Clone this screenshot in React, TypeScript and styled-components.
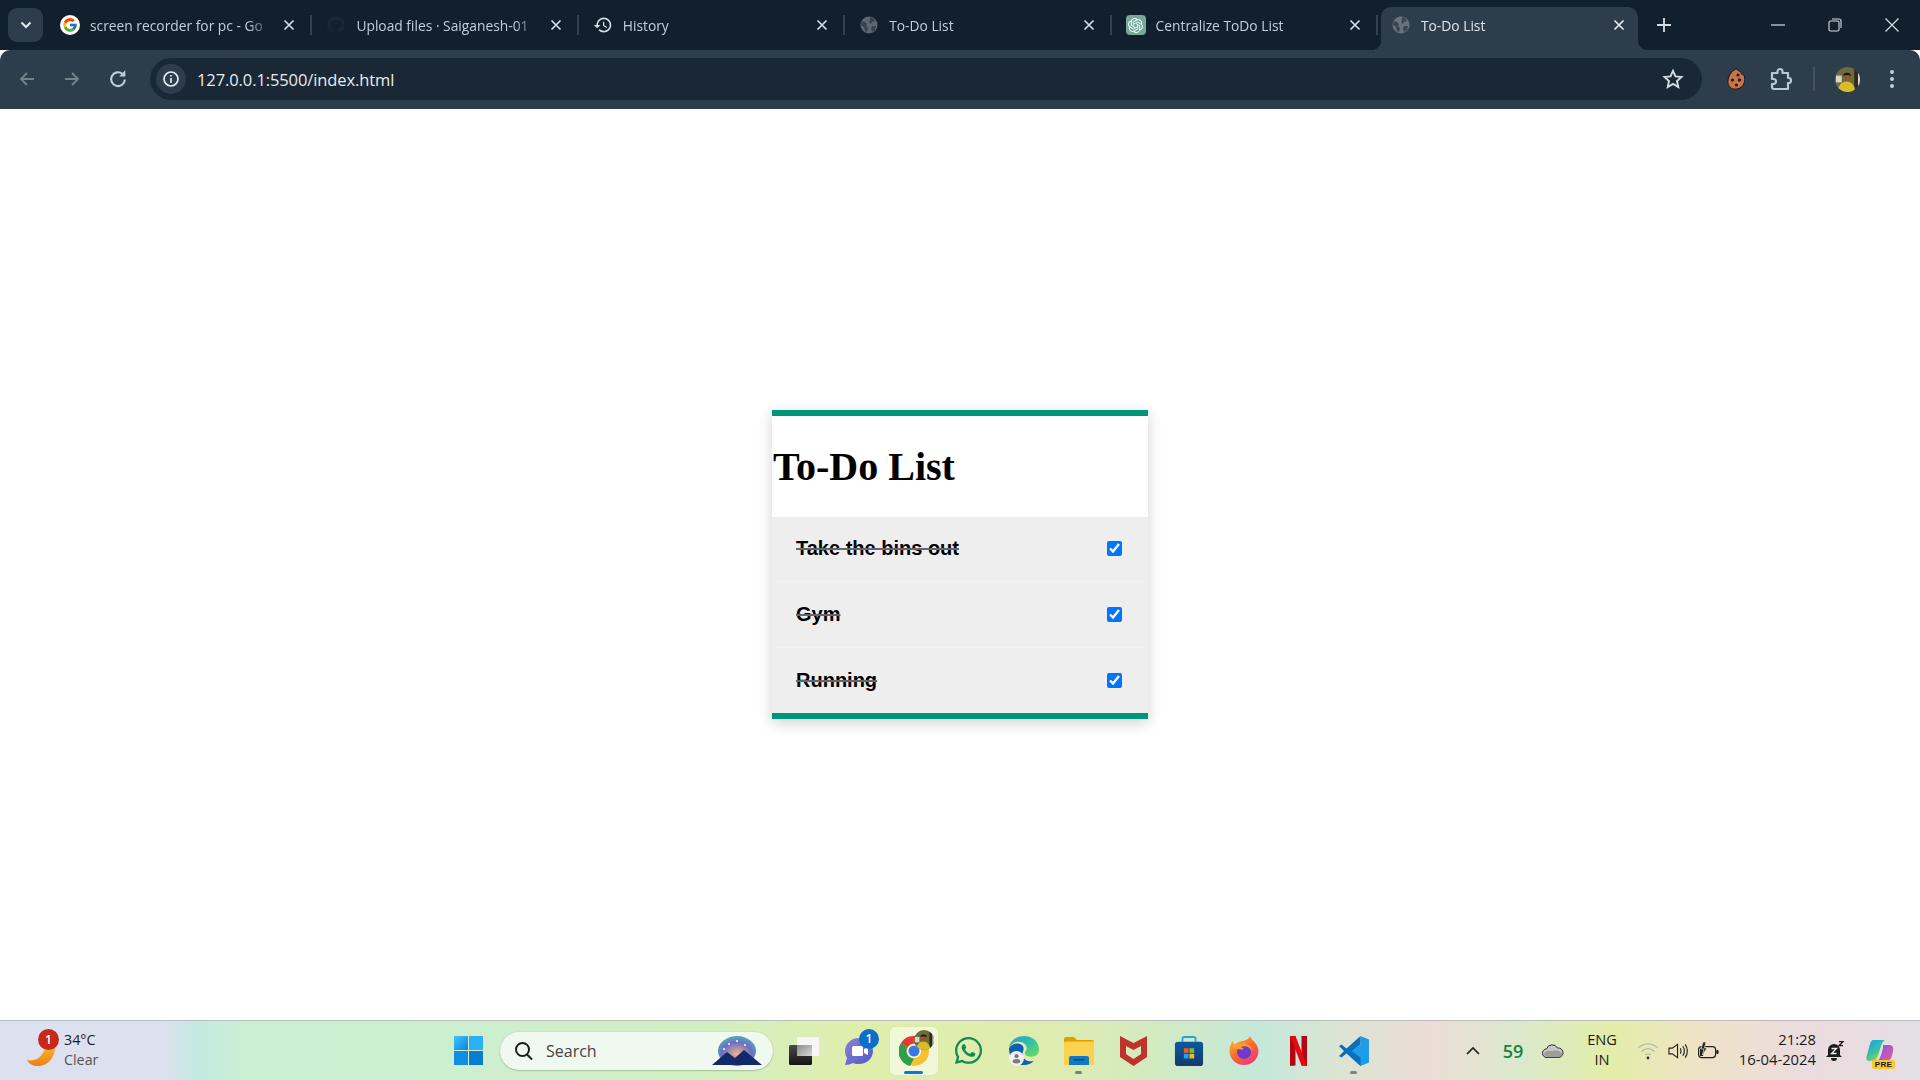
import React from 'react'
import styled, { createGlobalStyle } from 'styled-components'
import { FaGithub, FaWhatsapp } from 'react-icons/fa'
import { FcGoogle } from 'react-icons/fc'
import { SiOpenai } from 'react-icons/si'
import { MdHistory } from 'react-icons/md'

const GlobalStyle = createGlobalStyle`
  html, body {
    margin: 0;
    padding: 0;
    height: 100%;
    overflow: hidden;
    background: #fff;
  }
  * { box-sizing: border-box; }
`

const UI_FONT = `"Open Sans", "Noto Sans", sans-serif`

const Screen = styled.div`
  display: flex;
  flex-direction: column;
  width: 1920px;
  height: 1080px;
`

/* ---------- browser chrome ---------- */

const TabStrip = styled.div`
  display: flex;
  align-items: flex-end;
  height: 50px;
  flex: none;
  background: #12202e;
  padding-left: 8px;
  font-family: ${UI_FONT};
`
const TabListBtn = styled.div`
  width: 35px;
  height: 34px;
  margin: 0 3px 8px 0;
  border-radius: 9px;
  background: #2e3d4b;
  display: flex;
  align-items: center;
  justify-content: center;
`
const Tab = styled.div`
  position: relative;
  display: flex;
  align-items: center;
  width: 266.4px;
  height: 43px;
  padding: 0 13px 7px 14px;
  color: #c3ced8;

  &::after {
    content: '';
    position: absolute;
    right: 0;
    top: 8px;
    width: 2px;
    height: 20px;
    background: #33424f;
  }
`
const ActiveTab = styled.div`
  position: relative;
  display: flex;
  align-items: center;
  width: 257px;
  height: 43px;
  margin-left: 3px;
  padding: 0 9px 7px 10px;
  border-radius: 10px 10px 0 0;
  background: #2e3d4b;
  color: #dfe6ec;

  &::before, &::after {
    content: '';
    position: absolute;
    bottom: 0;
    width: 10px;
    height: 10px;
  }
  &::before {
    left: -10px;
    background: radial-gradient(circle at 0 0, transparent 10px, #2e3d4b 10.5px);
  }
  &::after {
    right: -10px;
    background: radial-gradient(circle at 100% 0, transparent 10px, #2e3d4b 10.5px);
  }
`
const Favicon = styled.span`
  flex: none;
  width: 20px;
  height: 20px;
  margin: 0 10px 0 0;
  display: flex;
  align-items: center;
  justify-content: center;
`
const TabTitle = styled.span`
  flex: 1;
  min-width: 0;
  font-size: 13.8px;
  white-space: nowrap;
  -webkit-mask-image: linear-gradient(90deg, #000 88%, rgba(0, 0, 0, 0.15) 100%);
  mask-image: linear-gradient(90deg, #000 88%, rgba(0, 0, 0, 0.15) 100%);
`
const TabClose = styled.span`
  flex: none;
  width: 20px;
  height: 20px;
  margin-left: 10px;
  display: flex;
  align-items: center;
  justify-content: center;
`
const NewTab = styled.div`
  width: 20px;
  height: 20px;
  margin: 0 0 15px 16px;
  display: flex;
  align-items: center;
  justify-content: center;
`
const WindowControls = styled.div`
  display: flex;
  margin: 0 0 15px auto;
`
const WinBtn = styled.div`
  width: 57px;
  height: 20px;
  display: flex;
  align-items: center;
  justify-content: center;
`
const Toolbar = styled.div`
  display: flex;
  align-items: center;
  height: 59px;
  flex: none;
  padding-bottom: 1px;
  background: #2e3d4b;
  border-radius: 10px 10px 0 0;
  font-family: ${UI_FONT};
`
const NavBtn = styled.div<{ $w: number }>`
  flex: none;
  width: ${({ $w }) => $w}px;
  height: 32px;
  display: flex;
  align-items: center;
  justify-content: center;
`
const Omnibox = styled.div`
  display: flex;
  align-items: center;
  width: 1552px;
  height: 42px;
  flex: none;
  margin: 0 18px 0 4px;
  padding: 0 18px 0 6px;
  border-radius: 21px;
  background: #1a2835;
`
const InfoChip = styled.div`
  width: 30px;
  height: 30px;
  border-radius: 50%;
  background: #2e3d4b;
  display: flex;
  align-items: center;
  justify-content: center;
  margin-right: 11px;
`
const UrlText = styled.span`
  flex: 1;
  font-size: 16.5px;
  color: #e6ebef;
  letter-spacing: -0.1px;
`
const ToolbarDivider = styled.div`
  flex: none;
  width: 2px;
  height: 24px;
  background: #45535f;
  margin: 0 19px 0 3px;
`

/* ---------- the todo card ---------- */

const Main = styled.main`
  flex: 1;
  display: flex;
  align-items: center;
  justify-content: center;
  background: #fff;
`
const Card = styled.section`
  width: 376px;
  background: #fff;
  border-top: 6px solid #009578;
  border-bottom: 6px solid #009578;
  box-shadow: 0 4px 14px rgba(0, 0, 0, 0.18);
`
const Title = styled.h1`
  margin: 0;
  height: 101px;
  padding: 28px 0 0 1px;
  font-family: "Liberation Serif", "Times New Roman", serif;
  font-size: 40px;
  font-weight: 700;
  line-height: 46px;
  color: #000;
`
const Item = styled.div`
  display: flex;
  align-items: center;
  justify-content: space-between;
  height: 65.6px;
  padding: 0 26px 0 24px;
  background: #eee;
  border-bottom: 1px solid #f2f2f2;
  &:last-child { border-bottom: none; }
`
const ItemText = styled.span`
  font-family: "Liberation Sans", Arial, sans-serif;
  font-size: 20px;
  font-weight: 700;
  color: #000;
  text-decoration: line-through;
  text-decoration-color: #666;
`
const ItemCheck = styled.input`
  width: 15px;
  height: 15px;
  margin: 0;
  accent-color: #0075ff;
`

/* ---------- windows taskbar ---------- */

const Taskbar = styled.footer`
  display: flex;
  align-items: center;
  height: 60px;
  flex: none;
  border-top: 1px solid #b9bdbd;
  color: #1b1b1b;
  font-family: ${UI_FONT};
  background: linear-gradient(90deg,
    #dde0ef 0, #dde0ee 165px, #c3e9e2 195px, #c9f0d4 240px, #cdefcf 480px,
    #d3efc0 720px, #e0eeac 860px, #dfecae 1030px, #d6ebbc 1130px, #c5e8da 1260px,
    #dce4d2 1340px, #ecdcd8 1430px, #dbe9cb 1520px, #e3eda8 1610px, #eee4c4 1690px,
    #ecdcdc 1790px, #e4dee6 1920px);
`
const Weather = styled.div`
  display: flex;
  align-items: center;
  width: 437px;
  padding-left: 26px;
  flex: none;
`
const WeatherIcon = styled.div`
  position: relative;
  width: 30px;
  height: 36px;
  margin-right: 8px;
`
const Badge = styled.span`
  position: absolute;
  display: flex;
  align-items: center;
  justify-content: center;
  border-radius: 50%;
  color: #fff;
  font-size: 12px;
  font-weight: 600;
`
const WeatherBadge = styled(Badge)`
  left: 12px;
  top: -4px;
  width: 21px;
  height: 21px;
  background: #c8281c;
`
const WeatherText = styled.div`
  padding-bottom: 2px;
  font-size: 14.3px;
  line-height: 20px;
  small {
    display: block;
    font-size: 14.3px;
    color: #555;
  }
`
const StartBtn = styled.div`
  width: 63px;
  display: flex;
  justify-content: center;
  flex: none;
`
const SearchPill = styled.div`
  display: flex;
  align-items: center;
  width: 273px;
  height: 38px;
  flex: none;
  padding: 0 10px 0 14px;
  border-radius: 19px;
  background: #eff9ef;
  box-shadow: 0 0.5px 1.5px rgba(0, 0, 0, 0.35);
  font-size: 16px;
  color: #444;
  span { flex: 1; margin-left: 12px; }
`
const Apps = styled.div`
  display: flex;
  flex: none;
  margin-left: 3px;
`
const AppSlot = styled.div<{ $active?: boolean; $open?: boolean }>`
  position: relative;
  width: 55px;
  height: 48px;
  display: flex;
  align-items: center;
  justify-content: center;
  ${({ $active }) => $active && `
    &::before {
      content: '';
      position: absolute;
      inset: 0 3.5px;
      border-radius: 5px;
      background: rgba(255, 255, 255, 0.55);
      box-shadow: 0 0 1px rgba(0, 0, 0, 0.15);
    }
  `}
  ${({ $open, $active }) => ($open || $active) && `
    &::after {
      content: '';
      position: absolute;
      left: 50%;
      bottom: 1px;
      width: ${$active ? 19 : 7}px;
      height: 3px;
      margin-left: ${$active ? -9.5 : -3.5}px;
      border-radius: 2px;
      background: ${$active ? '#0a78d4' : '#808080'};
    }
  `}
  > svg { position: relative; z-index: 1; }
`
const TeamsBadge = styled(Badge)`
  z-index: 2;
  right: 7px;
  top: 2px;
  width: 20px;
  height: 20px;
  background: #0a6fc9;
`
const ChromeAvatar = styled.span`
  position: absolute;
  z-index: 2;
  right: 7px;
  top: 3px;
  width: 20px;
  height: 20px;
  display: flex;
`
const Tray = styled.div`
  display: flex;
  align-items: center;
  margin-left: auto;
  padding-right: 14px;
`
const TraySlot = styled.div<{ $w: number }>`
  position: relative;
  flex: none;
  width: ${({ $w }) => $w}px;
  display: flex;
  align-items: center;
  justify-content: center;
`
const Battery59 = styled.span`
  font-size: 18px;
  font-weight: 600;
  color: #14863f;
`
const Lang = styled.div`
  padding-bottom: 3px;
  font-size: 14.6px;
  line-height: 20px;
  text-align: center;
`
const Clock = styled.div`
  flex: none;
  width: 92px;
  padding-bottom: 3px;
  font-size: 14.8px;
  line-height: 20px;
  text-align: right;
  white-space: nowrap;
`
const PreTag = styled.span`
  position: absolute;
  left: 18px;
  top: 20px;
  width: 23px;
  height: 9px;
  border-radius: 2px;
  background: #fdc72e;
  color: #1b1b1b;
  font-family: "Liberation Sans", sans-serif;
  font-size: 8px;
  font-weight: 700;
  line-height: 9px;
  letter-spacing: 0.4px;
  text-align: center;
`

/* ---------- drawn icons ---------- */

const Globe = ({ fill = '#5d6771' }: { fill?: string }) => (
  <svg width="18" height="18" viewBox="0 0 18 18">
    <circle cx="9" cy="9" r="8.5" fill={fill} />
    <path d="M2 5l3 1 2 2-1 2 2 2-1 4-2-1-1-4-3-2zM10 1l3 1 2 3-3 1-1 2-2-2 1-2zM12 10l4 0-1 4-3 2-1-3z" fill="#2e3d4b" opacity=".85" />
  </svg>
)
const CloseX = ({ color = '#d5dde4' }: { color?: string }) => (
  <svg width="12" height="12" viewBox="0 0 12 12">
    <path d="M1.5 1.5l9 9M10.5 1.5l-9 9" stroke={color} strokeWidth="1.7" />
  </svg>
)
const ArrowLeft = () => (
  <svg width="18" height="18" viewBox="0 0 18 18" fill="none" stroke="#75818b" strokeWidth="1.8">
    <path d="M16 9H3M9 3L3 9l6 6" />
  </svg>
)
const ArrowRight = () => (
  <svg width="18" height="18" viewBox="0 0 18 18" fill="none" stroke="#75818b" strokeWidth="1.8">
    <path d="M2 9h13M9 3l6 6-6 6" />
  </svg>
)
const Reload = () => (
  <svg width="20" height="20" viewBox="0 0 18 18" fill="none" stroke="#c3ced8" strokeWidth="1.9">
    <path d="M15.2 9.5A6.2 6.2 0 1 1 13 4.4" />
    <path d="M15.6 1.2v5.6H10z" fill="#c3ced8" stroke="none" />
  </svg>
)
const Info = () => (
  <svg width="18" height="18" viewBox="0 0 18 18" fill="none" stroke="#e6ebef" strokeWidth="1.7">
    <circle cx="9" cy="9" r="7" />
    <path d="M9 8v5M9 5v1.6" />
  </svg>
)
const Star = () => (
  <svg width="22" height="22" viewBox="0 0 22 22" fill="none" stroke="#d5dde4" strokeWidth="1.9" strokeLinejoin="miter">
    <path d="M11 2.8l2.5 5.6 6 .6-4.5 4 1.3 6L11 15.9 5.7 19l1.3-6-4.5-4 6-.6z" />
  </svg>
)
const Cookie = () => (
  <svg width="20" height="24" viewBox="0 0 20 24">
    <path d="M11 2c1 2 2 2 4 3 0 2 1 3 3 3 2 5 0 13-7 14C5 23 1 19 2 13 3 8 6 3 11 2z" fill="#c8734a" stroke="#1b1b1b" strokeWidth="1" />
    <circle cx="12" cy="8" r="1.6" fill="#2a1a12" />
    <circle cx="6.5" cy="13" r="1.6" fill="#2a1a12" />
    <circle cx="13.5" cy="13" r="1.7" fill="#2a1a12" />
    <circle cx="10.5" cy="18" r="1.6" fill="#2a1a12" />
  </svg>
)
const Puzzle = () => (
  <svg width="22" height="24" viewBox="0 0 22 24" fill="none" stroke="#b9c8d6" strokeWidth="2.2">
    <path d="M2 6h5.500V4.500a2.500 2.500 0 0 1 5 0V6H18v5h1a2 2.500 0 0 1 0 5h-1v6H4a2 2 0 0 1-2-2v-3h1.500a2.500 2.500 0 0 0 0-5H2z" strokeLinejoin="round" />
  </svg>
)
const Avatar = ({ id, size = 25 }: { id: string; size?: number }) => (
  <svg width={size} height={size} viewBox="0 0 26 26">
    <defs><clipPath id={id}><circle cx="13" cy="13" r="13" /></clipPath></defs>
    <g clipPath={`url(#${id})`}>
      <rect width="26" height="26" fill="#6d6a3c" />
      <rect x="20" width="6" height="26" fill="#2c2c1c" />
      <rect x="24" y="6" width="2" height="14" fill="#e8e8e0" />
      <rect x="1" y="9" width="6" height="7" fill="#d8d8c8" />
      <path d="M3 26c0-7 4-11 9-11s9 4 9 11z" fill="#d9bb2c" />
      <circle cx="12.500" cy="10" r="4" fill="#8c5a35" />
      <path d="M8.500 9c0-4 8-4 8 0-3-1-5-1-8 0z" fill="#1d160f" />
    </g>
  </svg>
)
const Dots = () => (
  <svg width="6" height="20" viewBox="0 0 6 20" fill="#c3ced8">
    <circle cx="3" cy="3" r="2" /><circle cx="3" cy="10" r="2" /><circle cx="3" cy="17" r="2" />
  </svg>
)
const Moon = () => (
  <svg width="30" height="32" viewBox="0 0 30 32" style={{ position: 'absolute', left: 0, top: 4 }}>
    <defs>
      <linearGradient id="moonG" x1="0" y1="0" x2="0" y2="1">
        <stop offset="0" stopColor="#f9c42d" />
        <stop offset="1" stopColor="#ea7f16" />
      </linearGradient>
    </defs>
    <path d="M29 7c1 12-6 22-17 22C7 29 3 27 1 23c10 2 17-4 19-16 3-1 6-1 9 0z" fill="url(#moonG)" />
  </svg>
)
const WinLogo = () => (
  <svg width="29" height="29" viewBox="0 0 29 29">
    <defs>
      <linearGradient id="winA" x1="0" y1="0" x2="1" y2="1">
        <stop offset="0" stopColor="#3fc6fb" />
        <stop offset="1" stopColor="#0e83dc" />
      </linearGradient>
    </defs>
    <rect width="14" height="14" fill="url(#winA)" />
    <rect x="15" width="14" height="14" fill="#2bb1f3" />
    <rect y="15" width="14" height="14" fill="#0f8ee2" />
    <rect x="15" y="15" width="14" height="14" fill="#0a7bd3" />
  </svg>
)
const SearchGlass = () => (
  <svg width="20" height="20" viewBox="0 0 20 20" fill="none" stroke="#1c1c1c" strokeWidth="2">
    <circle cx="8.500" cy="8.500" r="6.500" />
    <path d="M13 13.500l5 5" />
  </svg>
)
const SearchScene = () => (
  <svg width="52" height="30" viewBox="0 0 52 30">
    <defs>
      <radialGradient id="sky" cx=".5" cy=".6" r=".7">
        <stop offset="0" stopColor="#f2b38a" />
        <stop offset=".55" stopColor="#6c6fc4" />
        <stop offset="1" stopColor="#49c5b3" />
      </radialGradient>
    </defs>
    <ellipse cx="26" cy="15" rx="19" ry="15" fill="url(#sky)" />
    <path d="M1 29l15-13 8 6 9-8 18 15z" fill="#14296b" />
    <circle cx="18" cy="8" r="1" fill="#fff" /><circle cx="26" cy="5" r="1" fill="#fff" />
    <circle cx="34" cy="9" r="1" fill="#fff" /><circle cx="13" cy="13" r="1" fill="#fff" />
  </svg>
)
const TaskView = () => (
  <svg width="30" height="28" viewBox="0 0 30 28">
    <defs>
      <linearGradient id="tvDark" x1="0" y1="0" x2="0" y2="1">
        <stop offset="0" stopColor="#4a4a4a" />
        <stop offset="1" stopColor="#141414" />
      </linearGradient>
      <linearGradient id="tvMid" x1="0" y1="0" x2="1" y2="1">
        <stop offset="0" stopColor="#8c8c8c" />
        <stop offset="1" stopColor="#d8d8d8" />
      </linearGradient>
    </defs>
    <rect y="8" width="23" height="20" rx="1.500" fill="url(#tvDark)" />
    <rect x="8" width="22" height="19" rx="1.500" fill="#f6f6f6" />
    <rect x="8" y="8" width="15" height="11" fill="url(#tvMid)" />
  </svg>
)
const Teams = () => (
  <svg width="30" height="30" viewBox="0 0 30 30">
    <defs>
      <linearGradient id="teamsG" x1="0" y1="0" x2="1" y2="1">
        <stop offset="0" stopColor="#8d7fd8" />
        <stop offset="1" stopColor="#4f5bc4" />
      </linearGradient>
    </defs>
    <path d="M15 2C7 2 1 8 1 15c0 3 1 5 2 7l-2 7c3 0 6-1 8-2 2 1 4 1 6 1 8 0 14-6 14-13S23 2 15 2z" fill="url(#teamsG)" />
    <rect x="8" y="10" width="11" height="10" rx="1.500" fill="#fff" />
    <path d="M20 13l4-2v8l-4-2z" fill="#fff" />
  </svg>
)
const Chrome = () => (
  <svg width="30" height="30" viewBox="0 0 30 30">
    <circle cx="15" cy="15" r="15" fill="#fbc02d" />
    <path d="M15 0a15 15 0 0 1 13 7.500H15A7.500 7.500 0 0 0 8.500 11.200L2 7A15 15 0 0 1 15 0z" fill="#e53935" />
    <path d="M2 7l6.500 4.200A7.500 7.500 0 0 0 15 22.500L11 30A15 15 0 0 1 2 7z" fill="#2e9e4f" />
    <circle cx="15" cy="15" r="7" fill="#fff" />
    <circle cx="15" cy="15" r="5.600" fill="#3b78e7" />
  </svg>
)
const Edge = () => (
  <svg width="30" height="30" viewBox="0 0 32 32">
    <defs>
      <linearGradient id="edgeA" x1="0" y1="0" x2="1" y2="1">
        <stop offset="0" stopColor="#2b9ad8" />
        <stop offset=".5" stopColor="#2fc0a8" />
        <stop offset="1" stopColor="#74dc5c" />
      </linearGradient>
    </defs>
    <path d="M16 0c9 0 16 6 16 15 0 5-4 7-8 7-3 0-7-1-7-4 0-2 2-2 2-5 0-4-4-7-9-7C5 6 2 9 0 13 1 5 8 0 16 0z" fill="url(#edgeA)" />
    <path d="M0 13c2-3 5-5 9-5 5 0 8 4 6 8-2 5 1 10 7 11 2 0 4 0 5-1-3 3-7 5-11 5C7 31 0 24 0 13z" fill="#0d5fb0" />
    <circle cx="8" cy="24" r="8" fill="#f1f1f1" />
    <circle cx="8" cy="21.500" r="2.200" fill="#7b7b7b" />
    <ellipse cx="8" cy="27" rx="4" ry="2.400" fill="#7b7b7b" />
  </svg>
)
const Folder = () => (
  <svg width="30" height="28" viewBox="0 0 30 28">
    <path d="M0 2a2 2 0 0 1 2-2h8l3 3h15a2 2 0 0 1 2 2v4H0z" fill="#dba100" />
    <rect y="4.500" width="30" height="23.500" rx="1.500" fill="#fbd24f" />
    <path d="M5 28v-7a2 2 0 0 1 2-2h16a2 2 0 0 1 2 2v7z" fill="#0f79c6" />
    <rect x="10" y="22" width="10" height="1.600" fill="#07446f" />
  </svg>
)
const McAfee = () => (
  <svg width="27" height="30" viewBox="0 0 27 30">
    <path fillRule="evenodd" d="M0 0l13.500 7L27 0v21l-13.500 9L0 21zM6 10v8l7.500 5 7.500-5v-8l-7.500 4z" fill="#c0322c" />
  </svg>
)
const Store = () => (
  <svg width="30" height="30" viewBox="0 0 30 32">
    <defs>
      <linearGradient id="storeG" x1="0" y1="0" x2="0" y2="1">
        <stop offset="0" stopColor="#0c57a4" />
        <stop offset="1" stopColor="#153a6d" />
      </linearGradient>
    </defs>
    <path d="M8 6V3a2 2 0 0 1 2-2h10a2 2 0 0 1 2 2v3" fill="none" stroke="#26a3e0" strokeWidth="2" />
    <rect y="6" width="30" height="26" rx="3" fill="url(#storeG)" />
    <rect x="9.500" y="13" width="5" height="5" fill="#ea5a2a" />
    <rect x="15.500" y="13" width="5" height="5" fill="#7fba2a" />
    <rect x="9.500" y="19" width="5" height="5" fill="#1fa6e8" />
    <rect x="15.500" y="19" width="5" height="5" fill="#fdb813" />
  </svg>
)
const Firefox = () => (
  <svg width="30" height="29" viewBox="0 0 30 29">
    <defs>
      <linearGradient id="foxG" x1="0" y1="0" x2=".7" y2="1">
        <stop offset="0" stopColor="#ffc531" />
        <stop offset=".55" stopColor="#fb6a2c" />
        <stop offset="1" stopColor="#ee3a78" />
      </linearGradient>
    </defs>
    <path d="M21 0c1 4 8 7 8.500 15A14.500 14 0 0 1 .5 15C.5 11 2 7 4 5c0 2 1 3 2 4 2-3 5-4 8-4 3-1 6-2 7-5z" fill="url(#foxG)" />
    <circle cx="15" cy="16" r="7" fill="#7139c9" />
    <path d="M3 11c3-4 8-5 12-4 5 1 8 4 8 8-2-4-7-6-11-4 1 1 2 1 3 2-3 1-8 0-12-2z" fill="#ff9a30" />
  </svg>
)
const Netflix = () => (
  <svg width="17" height="30" viewBox="0 0 17 30">
    <path d="M0 0h5.500v29.500L0 30zM11.500 0H17v30l-5.500-.5z" fill="#b20710" />
    <path d="M0 0h5.500L17 30l-5.500-.5z" fill="#e50914" />
  </svg>
)
const VsCode = () => (
  <svg width="30" height="30" viewBox="0 0 30 30">
    <path d="M21.500 0L30 3.500v23L21.500 30 8 16.500 21.500 9z" fill="#1f9ce8" />
    <path d="M21.500 0L7.500 12.500 2.500 8.500 0 10l5 5-5 5 2.500 1.500 5-4L21.500 30v-8.500L12.500 15l9-6.500z" fill="#0b6fbd" />
  </svg>
)
const Caret = () => (
  <svg width="16" height="10" viewBox="0 0 16 10" fill="none" stroke="#1c1c1c" strokeWidth="1.700">
    <path d="M2 8l6-6 6 6" />
  </svg>
)
const Cloud = () => (
  <svg width="22" height="14" viewBox="0 0 22 14">
    <path d="M5 13.500a4.300 4.300 0 0 1-.5-8.600A6 6 0 0 1 15.500 4 4.800 4.800 0 0 1 17 13.500z" fill="#c8c8c8" stroke="#2c2c2c" strokeWidth="1" />
    <path d="M1.500 10c2-3 5-4 8-3 4-1 9-1 11.500 4l-3 2.500H5z" fill="#7a7a7a" opacity=".55" />
  </svg>
)
const Wifi = () => (
  <svg width="22" height="18" viewBox="0 0 22 18" fill="none" stroke="#b7bda9" strokeWidth="1.300">
    <path d="M1 6c6-5.500 14-5.500 20 0M4.500 9.500c4-3.500 9-3.500 13 0M8 13c2-1.500 4-1.500 6 0" />
    <circle cx="11" cy="16" r="1.400" fill="#333" stroke="none" />
  </svg>
)
const Volume = () => (
  <svg width="21" height="18" viewBox="0 0 22 18" fill="none" stroke="#222" strokeWidth="1.200">
    <path d="M1 6h3.500L10 2v14l-5.500-4H1z" />
    <path d="M13 6c1 2 1 4 0 6M15.500 4c2 3 2 7 0 10M18 2c3 4 3 10 0 14" />
  </svg>
)
const BatteryIcon = () => (
  <svg width="21" height="18" viewBox="0 0 21 18">
    <rect x=".6" y="4.600" width="17" height="11" rx="3" fill="none" stroke="#222" strokeWidth="1.200" />
    <rect x="18.200" y="8" width="2.400" height="4" rx="1" fill="#222" />
    <path d="M2 6.500h4l-1 7.500H2z" fill="#222" />
    <path d="M5 0L3 7h3l-1.500 6L9 6H6.500L8 0z" fill="#222" stroke="#e9e3c6" strokeWidth=".7" />
  </svg>
)
const Bell = () => (
  <svg width="18" height="20" viewBox="0 0 18 20">
    <path d="M8 3a6 6 0 0 1 6 6v5l2 2H0l2-2V9a6 6 0 0 1 6-6z" fill="#1b1b1b" />
    <path d="M5 17h6a3 3 0 0 1-6 0z" fill="#1b1b1b" />
    <path d="M5.500 7.500h5l-5 5h5" fill="none" stroke="#eee" strokeWidth="1.300" />
    <path d="M13 .700h4l-4 4h4" fill="none" stroke="#1b1b1b" strokeWidth="1.300" />
  </svg>
)
const Copilot = () => (
  <svg width="28" height="22" viewBox="0 0 28 22">
    <defs>
      <linearGradient id="copA" x1="0" y1="0" x2=".6" y2="1">
        <stop offset="0" stopColor="#1f9fe8" />
        <stop offset=".6" stopColor="#38c1a0" />
        <stop offset="1" stopColor="#a5d93f" />
      </linearGradient>
      <linearGradient id="copB" x1="0" y1="0" x2="1" y2="1">
        <stop offset="0" stopColor="#7a5be0" />
        <stop offset="1" stopColor="#ea5aa2" />
      </linearGradient>
    </defs>
    <path d="M7 0h12c-2 1-3 3-4 6l-3 10c-1 3-3 5-6 5H3c-3 0-3-3-2-6l3-11C5 1 6 0 7 0z" fill="url(#copA)" />
    <path d="M17 5h6c3 0 5 2 4 6l-1 5c-1 3-3 5-6 5h-9c2-1 3-3 4-6l2-7c0-1 0-2 0-3z" fill="url(#copB)" />
  </svg>
)
const GoogleChip = styled.span`
  width: 20px;
  height: 20px;
  border-radius: 50%;
  background: #fff;
  display: flex;
  align-items: center;
  justify-content: center;
`
const GptChip = styled.span`
  width: 20px;
  height: 20px;
  border-radius: 4px;
  background: #74aa9c;
  display: flex;
  align-items: center;
  justify-content: center;
`

const tabs: { title: string; icon: React.ReactNode }[] = [
  { title: 'screen recorder for pc - Go', icon: <GoogleChip><FcGoogle size={16} /></GoogleChip> },
  { title: 'Upload files · Saiganesh-01', icon: <FaGithub size={18} color="#1a2835" /> },
  { title: 'History', icon: <MdHistory size={20} color="#d5dde4" /> },
  { title: 'To-Do List', icon: <Globe /> },
  { title: 'Centralize ToDo List', icon: <GptChip><SiOpenai size={15} color="#fff" /></GptChip> },
]

const todos = ['Take the bins out', 'Gym', 'Running']

export default function App() {
  return (
    <Screen>
      <GlobalStyle />
      <TabStrip>
        <TabListBtn>
          <svg width="12" height="8" viewBox="0 0 12 8" fill="none" stroke="#e6ebef" strokeWidth="2">
            <path d="M1.500 1.500L6 6l4.500-4.500" />
          </svg>
        </TabListBtn>
        {tabs.map((t) => (
          <Tab key={t.title}>
            <Favicon>{t.icon}</Favicon>
            <TabTitle>{t.title}</TabTitle>
            <TabClose><CloseX /></TabClose>
          </Tab>
        ))}
        <ActiveTab>
          <Favicon><Globe fill="#69727c" /></Favicon>
          <TabTitle>To-Do List</TabTitle>
          <TabClose><CloseX color="#e6ebef" /></TabClose>
        </ActiveTab>
        <NewTab>
          <svg width="14" height="14" viewBox="0 0 14 14" stroke="#d5dde4" strokeWidth="1.800">
            <path d="M7 0v14M0 7h14" />
          </svg>
        </NewTab>
        <WindowControls>
          <WinBtn>
            <svg width="14" height="2" viewBox="0 0 14 2"><path d="M0 1h14" stroke="#d5dde4" strokeWidth="1.200" /></svg>
          </WinBtn>
          <WinBtn>
            <svg width="14" height="14" viewBox="0 0 14 14" fill="none" stroke="#d5dde4" strokeWidth="1.100">
              <rect x="1" y="3" width="10" height="10" rx="1.500" />
              <path d="M4 1h7a2 2 0 0 1 2 2v7" />
            </svg>
          </WinBtn>
          <WinBtn>
            <svg width="14" height="14" viewBox="0 0 14 14" stroke="#d5dde4" strokeWidth="1.200">
              <path d="M.5.500l13 13M13.500.500l-13 13" />
            </svg>
          </WinBtn>
        </WindowControls>
      </TabStrip>

      <Toolbar>
        <NavBtn $w={54}><ArrowLeft /></NavBtn>
        <NavBtn $w={36}><ArrowRight /></NavBtn>
        <NavBtn $w={56}><Reload /></NavBtn>
        <Omnibox>
          <InfoChip><Info /></InfoChip>
          <UrlText>127.0.0.1:5500/index.html</UrlText>
          <Star />
        </Omnibox>
        <NavBtn $w={32}><Cookie /></NavBtn>
        <NavBtn $w={58}><Puzzle /></NavBtn>
        <ToolbarDivider />
        <NavBtn $w={26}><Avatar id="avatarMain" /></NavBtn>
        <NavBtn $w={64}><Dots /></NavBtn>
      </Toolbar>

      <Main>
        <Card>
          <Title>To-Do List</Title>
          {todos.map((todo) => (
            <Item key={todo}>
              <ItemText>{todo}</ItemText>
              <ItemCheck type="checkbox" checked readOnly />
            </Item>
          ))}
        </Card>
      </Main>

      <Taskbar>
        <Weather>
          <WeatherIcon>
            <Moon />
            <WeatherBadge>1</WeatherBadge>
          </WeatherIcon>
          <WeatherText>34°C<small>Clear</small></WeatherText>
        </Weather>
        <StartBtn><WinLogo /></StartBtn>
        <SearchPill>
          <SearchGlass />
          <span>Search</span>
          <SearchScene />
        </SearchPill>
        <Apps>
          <AppSlot><TaskView /></AppSlot>
          <AppSlot><Teams /><TeamsBadge>1</TeamsBadge></AppSlot>
          <AppSlot $active>
            <Chrome />
            <ChromeAvatar><Avatar id="avatarChrome" size={20} /></ChromeAvatar>
          </AppSlot>
          <AppSlot><FaWhatsapp size={31} color="#128a56" /></AppSlot>
          <AppSlot><Edge /></AppSlot>
          <AppSlot $open><Folder /></AppSlot>
          <AppSlot><McAfee /></AppSlot>
          <AppSlot><Store /></AppSlot>
          <AppSlot><Firefox /></AppSlot>
          <AppSlot><Netflix /></AppSlot>
          <AppSlot $open><VsCode /></AppSlot>
        </Apps>
        <Tray>
          <TraySlot $w={40}><Caret /></TraySlot>
          <TraySlot $w={40}><Battery59>59</Battery59></TraySlot>
          <TraySlot $w={40}><Cloud /></TraySlot>
          <TraySlot $w={58}><Lang>ENG<br />IN</Lang></TraySlot>
          <TraySlot $w={34}><Wifi /></TraySlot>
          <TraySlot $w={27}><Volume /></TraySlot>
          <TraySlot $w={32}><BatteryIcon /></TraySlot>
          <Clock>21:28<br />16-04-2024</Clock>
          <TraySlot $w={38}><Bell /></TraySlot>
          <TraySlot $w={52}>
            <Copilot />
            <PreTag>PRE</PreTag>
          </TraySlot>
        </Tray>
      </Taskbar>
    </Screen>
  )
}
